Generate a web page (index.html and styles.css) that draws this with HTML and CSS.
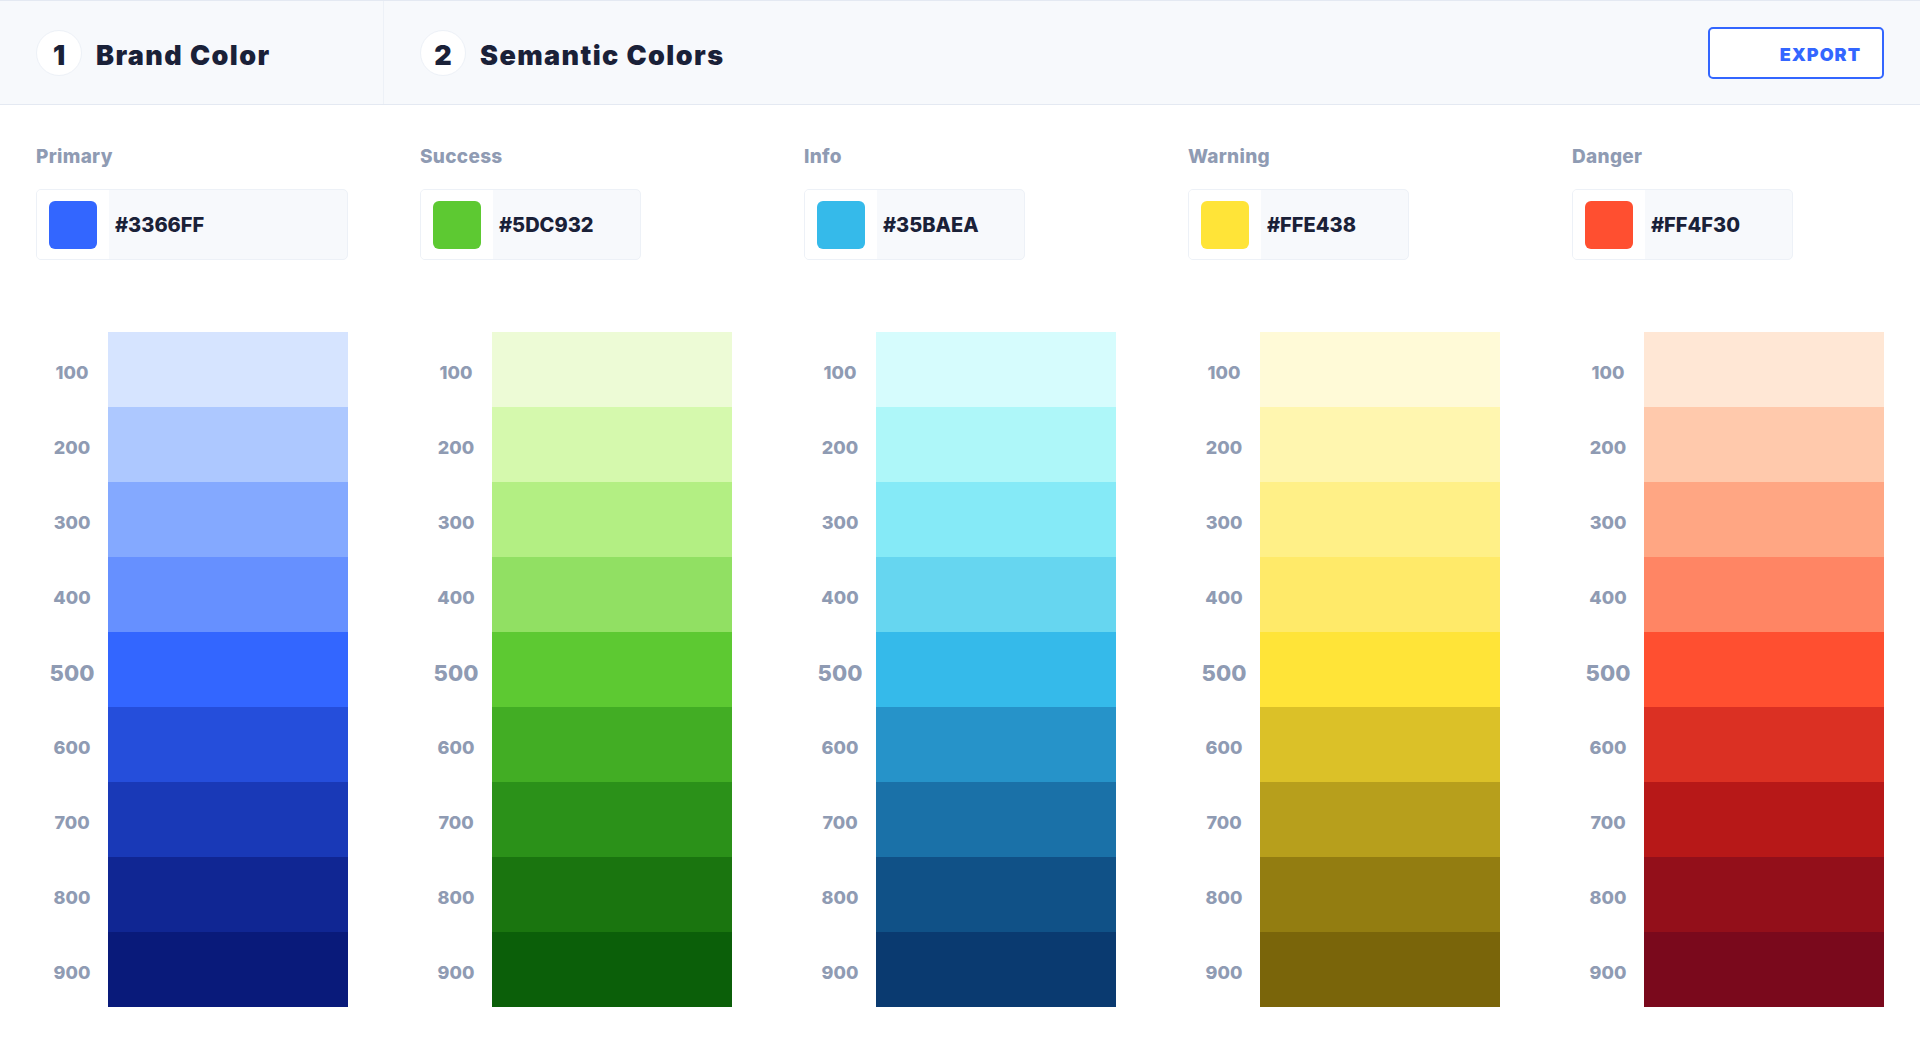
FILE: index.html
```html
<!DOCTYPE html>
<html lang="en">
<head>
<meta charset="utf-8">
<title>Color Palettes</title>
<link rel="stylesheet" href="styles.css">
</head>
<body>
<header class="topbar">
  <div class="step step-brand">
    <span class="step-num">1</span>
    <h2 class="step-title">Brand Color</h2>
  </div>
  <div class="step step-semantic">
    <span class="step-num">2</span>
    <h2 class="step-title">Semantic Colors</h2>
    <button class="export-btn" type="button">EXPORT</button>
  </div>
</header>

<main class="palettes">
  <section class="palette">
    <div class="palette-name">Primary</div>
    <div class="swatch-card swatch-card-wide">
      <div class="chip-wrap"><span class="chip" style="background:#3366FF"></span></div>
      <span class="hex">#3366FF</span>
    </div>
    <div class="scale">
      <div class="shade"><span class="shade-label">100</span><span class="shade-bar" style="background:#D6E4FF"></span></div>
      <div class="shade"><span class="shade-label">200</span><span class="shade-bar" style="background:#ADC8FF"></span></div>
      <div class="shade"><span class="shade-label">300</span><span class="shade-bar" style="background:#84A9FF"></span></div>
      <div class="shade"><span class="shade-label">400</span><span class="shade-bar" style="background:#6690FF"></span></div>
      <div class="shade shade-main"><span class="shade-label">500</span><span class="shade-bar" style="background:#3366FF"></span></div>
      <div class="shade"><span class="shade-label">600</span><span class="shade-bar" style="background:#254EDB"></span></div>
      <div class="shade"><span class="shade-label">700</span><span class="shade-bar" style="background:#1939B7"></span></div>
      <div class="shade"><span class="shade-label">800</span><span class="shade-bar" style="background:#102693"></span></div>
      <div class="shade"><span class="shade-label">900</span><span class="shade-bar" style="background:#091A7A"></span></div>
    </div>
  </section>

  <section class="palette">
    <div class="palette-name">Success</div>
    <div class="swatch-card">
      <div class="chip-wrap"><span class="chip" style="background:#5DC932"></span></div>
      <span class="hex">#5DC932</span>
    </div>
    <div class="scale">
      <div class="shade"><span class="shade-label">100</span><span class="shade-bar" style="background:#EDFBD6"></span></div>
      <div class="shade"><span class="shade-label">200</span><span class="shade-bar" style="background:#D5F9AD"></span></div>
      <div class="shade"><span class="shade-label">300</span><span class="shade-bar" style="background:#B3EF83"></span></div>
      <div class="shade"><span class="shade-label">400</span><span class="shade-bar" style="background:#91E063"></span></div>
      <div class="shade shade-main"><span class="shade-label">500</span><span class="shade-bar" style="background:#5DC932"></span></div>
      <div class="shade"><span class="shade-label">600</span><span class="shade-bar" style="background:#42AD24"></span></div>
      <div class="shade"><span class="shade-label">700</span><span class="shade-bar" style="background:#2B9119"></span></div>
      <div class="shade"><span class="shade-label">800</span><span class="shade-bar" style="background:#1A750F"></span></div>
      <div class="shade"><span class="shade-label">900</span><span class="shade-bar" style="background:#0B5F09"></span></div>
    </div>
  </section>

  <section class="palette">
    <div class="palette-name">Info</div>
    <div class="swatch-card">
      <div class="chip-wrap"><span class="chip" style="background:#35BAEA"></span></div>
      <span class="hex">#35BAEA</span>
    </div>
    <div class="scale">
      <div class="shade"><span class="shade-label">100</span><span class="shade-bar" style="background:#D6FCFD"></span></div>
      <div class="shade"><span class="shade-label">200</span><span class="shade-bar" style="background:#AEF7F9"></span></div>
      <div class="shade"><span class="shade-label">300</span><span class="shade-bar" style="background:#85EAF7"></span></div>
      <div class="shade"><span class="shade-label">400</span><span class="shade-bar" style="background:#66D6F0"></span></div>
      <div class="shade shade-main"><span class="shade-label">500</span><span class="shade-bar" style="background:#35BAEA"></span></div>
      <div class="shade"><span class="shade-label">600</span><span class="shade-bar" style="background:#2693C9"></span></div>
      <div class="shade"><span class="shade-label">700</span><span class="shade-bar" style="background:#1A71A8"></span></div>
      <div class="shade"><span class="shade-label">800</span><span class="shade-bar" style="background:#105187"></span></div>
      <div class="shade"><span class="shade-label">900</span><span class="shade-bar" style="background:#0A3A70"></span></div>
    </div>
  </section>

  <section class="palette">
    <div class="palette-name">Warning</div>
    <div class="swatch-card">
      <div class="chip-wrap"><span class="chip" style="background:#FFE438"></span></div>
      <span class="hex">#FFE438</span>
    </div>
    <div class="scale">
      <div class="shade"><span class="shade-label">100</span><span class="shade-bar" style="background:#FFFAD7"></span></div>
      <div class="shade"><span class="shade-label">200</span><span class="shade-bar" style="background:#FFF6AF"></span></div>
      <div class="shade"><span class="shade-label">300</span><span class="shade-bar" style="background:#FFF087"></span></div>
      <div class="shade"><span class="shade-label">400</span><span class="shade-bar" style="background:#FFEA69"></span></div>
      <div class="shade shade-main"><span class="shade-label">500</span><span class="shade-bar" style="background:#FFE438"></span></div>
      <div class="shade"><span class="shade-label">600</span><span class="shade-bar" style="background:#DBC128"></span></div>
      <div class="shade"><span class="shade-label">700</span><span class="shade-bar" style="background:#B79F1C"></span></div>
      <div class="shade"><span class="shade-label">800</span><span class="shade-bar" style="background:#937D11"></span></div>
      <div class="shade"><span class="shade-label">900</span><span class="shade-bar" style="background:#7A650A"></span></div>
    </div>
  </section>

  <section class="palette">
    <div class="palette-name">Danger</div>
    <div class="swatch-card">
      <div class="chip-wrap"><span class="chip" style="background:#FF4F30"></span></div>
      <span class="hex">#FF4F30</span>
    </div>
    <div class="scale">
      <div class="shade"><span class="shade-label">100</span><span class="shade-bar" style="background:#FFE7D5"></span></div>
      <div class="shade"><span class="shade-label">200</span><span class="shade-bar" style="background:#FFC9AC"></span></div>
      <div class="shade"><span class="shade-label">300</span><span class="shade-bar" style="background:#FFA683"></span></div>
      <div class="shade"><span class="shade-label">400</span><span class="shade-bar" style="background:#FF8564"></span></div>
      <div class="shade shade-main"><span class="shade-label">500</span><span class="shade-bar" style="background:#FF4F30"></span></div>
      <div class="shade"><span class="shade-label">600</span><span class="shade-bar" style="background:#DB3023"></span></div>
      <div class="shade"><span class="shade-label">700</span><span class="shade-bar" style="background:#B71818"></span></div>
      <div class="shade"><span class="shade-label">800</span><span class="shade-bar" style="background:#930F1A"></span></div>
      <div class="shade"><span class="shade-label">900</span><span class="shade-bar" style="background:#7A091C"></span></div>
    </div>
  </section>
</main>
</body>
</html>
```
FILE: styles.css
```css
* {
  box-sizing: border-box;
}

html, body {
  margin: 0;
  padding: 0;
  background: #ffffff;
}

body {
  font-family: Inter, "Liberation Sans", Arial, sans-serif;
  font-weight: 800;
  color: #1a2138;
  width: 1920px;
  height: 1044px;
  overflow: hidden;
}

/* ---------- Top bar ---------- */
.topbar {
  display: flex;
  height: 105px;
  background: #f7f9fc;
  border-top: 1px solid #e4e9f2;
  border-bottom: 1px solid #e4e9f2;
}

.step {
  display: flex;
  align-items: center;
  padding: 0 36px;
}

.step-brand {
  width: 384px;
  border-right: 1px solid #edf1f7;
}

.step-semantic {
  flex: 1;
}

.step-num {
  width: 46px;
  height: 46px;
  border-radius: 50%;
  background: #ffffff;
  border: 1px solid #edf1f7;
  display: flex;
  align-items: center;
  justify-content: center;
  padding-top: 6px;
  font-size: 27px;
  font-weight: 900;
  line-height: 1;
  color: #1a2138;
  flex-shrink: 0;
}

.step-title {
  margin: 6px 0 0 14px;
  font-size: 27px;
  font-weight: 900;
  letter-spacing: 1.4px;
  color: #1a2138;
  line-height: 32px;
}

.export-btn {
  margin-left: auto;
  width: 176px;
  height: 52px;
  background: #ffffff;
  border: 2px solid #3366ff;
  border-radius: 5px;
  color: #3366ff;
  font-family: Inter, "Liberation Sans", Arial, sans-serif;
  font-weight: 900;
  font-size: 18px;
  letter-spacing: 1px;
  line-height: 1;
  display: flex;
  align-items: center;
  justify-content: flex-end;
  padding: 5px 21px 0 0;
}

/* ---------- Palettes ---------- */
.palettes {
  display: flex;
  gap: 72px;
  padding: 40px 36px 0;
}

.palette {
  width: 312px;
  flex-shrink: 0;
}

.palette-name {
  font-size: 19px;
  line-height: 24px;
  letter-spacing: 0.3px;
  color: #8f9bb3;
}

.swatch-card {
  margin-top: 20px;
  width: 221px;
  height: 71px;
  display: flex;
  align-items: stretch;
  border: 1px solid #edf1f7;
  border-radius: 5px;
  background: #f7f9fc;
  overflow: hidden;
}

.swatch-card-wide {
  width: 312px;
}

.chip-wrap {
  width: 72px;
  background: #ffffff;
  display: flex;
  align-items: center;
  justify-content: center;
  flex-shrink: 0;
}

.chip {
  width: 48px;
  height: 48px;
  border-radius: 6px;
}

.hex {
  display: flex;
  align-items: center;
  padding-left: 6px;
  font-size: 20px;
  color: #1a2138;
}

.scale {
  margin-top: 72px;
  display: flex;
  flex-direction: column;
}

.shade {
  display: flex;
  height: 75px;
}

.shade-label {
  width: 72px;
  display: flex;
  align-items: center;
  justify-content: center;
  padding-top: 6px;
  font-size: 18px;
  color: #8f9bb3;
}

.shade-main .shade-label {
  font-size: 22px;
}

.shade-bar {
  width: 240px;
}
```
